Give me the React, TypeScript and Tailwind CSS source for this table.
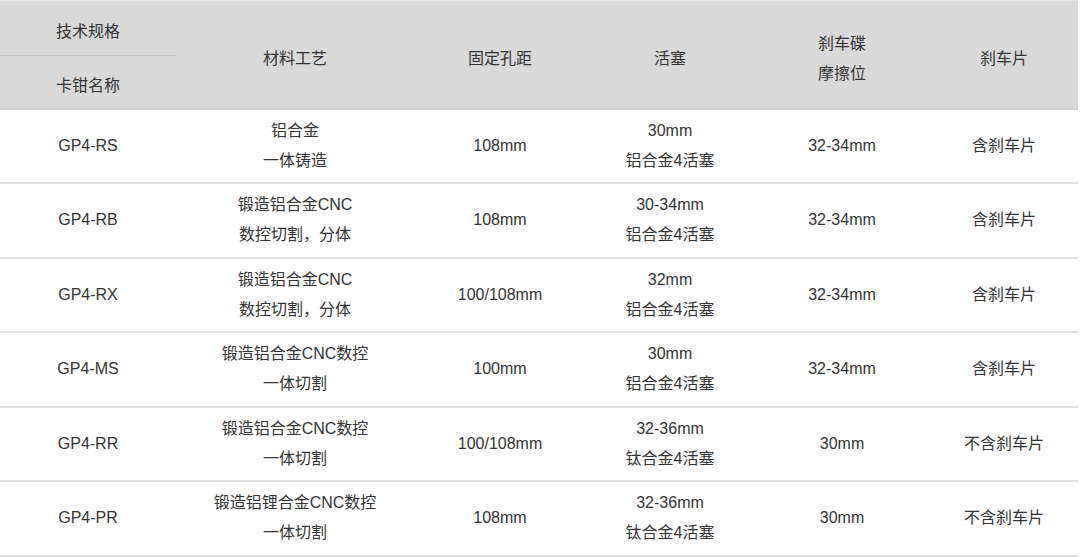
import React from "react";

type Row = {
  name: string;
  material: [string, string];
  hole: string;
  piston: [string, string];
  disc: string;
  pads: string;
};

const rows: Row[] = [
  { name: "GP4-RS", material: ["铝合金", "一体铸造"], hole: "108mm", piston: ["30mm", "铝合金4活塞"], disc: "32-34mm", pads: "含刹车片" },
  { name: "GP4-RB", material: ["锻造铝合金CNC", "数控切割，分体"], hole: "108mm", piston: ["30-34mm", "铝合金4活塞"], disc: "32-34mm", pads: "含刹车片" },
  { name: "GP4-RX", material: ["锻造铝合金CNC", "数控切割，分体"], hole: "100/108mm", piston: ["32mm", "铝合金4活塞"], disc: "32-34mm", pads: "含刹车片" },
  { name: "GP4-MS", material: ["锻造铝合金CNC数控", "一体切割"], hole: "100mm", piston: ["30mm", "铝合金4活塞"], disc: "32-34mm", pads: "含刹车片" },
  { name: "GP4-RR", material: ["锻造铝合金CNC数控", "一体切割"], hole: "100/108mm", piston: ["32-36mm", "钛合金4活塞"], disc: "30mm", pads: "不含刹车片" },
  { name: "GP4-PR", material: ["锻造铝锂合金CNC数控", "一体切割"], hole: "108mm", piston: ["32-36mm", "钛合金4活塞"], disc: "30mm", pads: "不含刹车片" },
];

function Two({ lines }: { lines: [string, string] }) {
  return (
    <div className="flex flex-col items-center leading-[30px]">
      <span>{lines[0]}</span>
      <span>{lines[1]}</span>
    </div>
  );
}

export default function App() {
  return (
    <div
      className="w-[1080px] h-[558px] bg-white text-[16px] text-[#333]"
      style={{ fontFamily: '"Liberation Sans", "Noto Sans CJK SC", sans-serif' }}
    >
      <table className="w-[1078px] table-fixed border-collapse text-center">
        <colgroup>
          <col className="w-[176px]" />
          <col className="w-[238px]" />
          <col className="w-[172px]" />
          <col className="w-[168px]" />
          <col className="w-[176px]" />
          <col className="w-[148px]" />
        </colgroup>
        <thead className="bg-[#d9d9d9]">
          <tr className="border-t border-[#e4e4e4]">
            <th className="h-[55px] pt-[8px] font-normal border-b border-[#c4c4c4]">技术规格</th>
            <th rowSpan={2} className="pt-[10px] font-normal border-b-2 border-[#cfcfcf]">材料工艺</th>
            <th rowSpan={2} className="pt-[10px] font-normal border-b-2 border-[#cfcfcf]">固定孔距</th>
            <th rowSpan={2} className="pt-[10px] font-normal border-b-2 border-[#cfcfcf]">活塞</th>
            <th rowSpan={2} className="pt-[10px] font-normal border-b-2 border-[#cfcfcf]">
              <Two lines={["刹车碟", "摩擦位"]} />
            </th>
            <th rowSpan={2} className="pt-[10px] font-normal border-b-2 border-[#cfcfcf]">刹车片</th>
          </tr>
          <tr>
            <th className="h-[53px] pt-[8px] font-normal border-b-2 border-[#cfcfcf]">卡钳名称</th>
          </tr>
        </thead>
        <tbody>
          {rows.map((r) => (
            <tr key={r.name} className="h-[74.5px] border-b-2 border-[#e0e0e0]">
              <td>{r.name}</td>
              <td><Two lines={r.material} /></td>
              <td>{r.hole}</td>
              <td><Two lines={r.piston} /></td>
              <td>{r.disc}</td>
              <td>{r.pads}</td>
            </tr>
          ))}
        </tbody>
      </table>
    </div>
  );
}
